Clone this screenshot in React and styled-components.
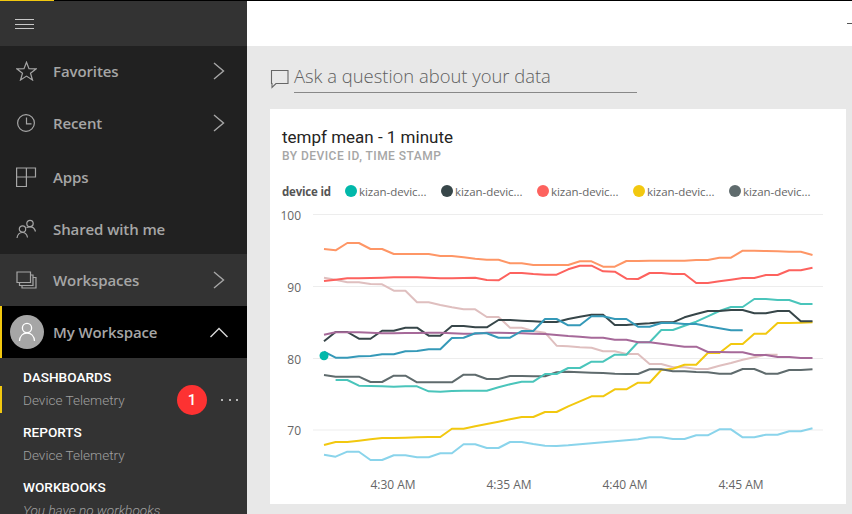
import React from "react";
import styled, { createGlobalStyle } from "styled-components";

const Global = createGlobalStyle`
  html, body { margin: 0; padding: 0; background: #fff; overflow: hidden; }
`;

const Page = styled.div`
  width: 852px;
  height: 514px;
  overflow: hidden;
  display: flex;
  flex-direction: column;
  font-family: "Open Sans", "Liberation Sans", sans-serif;
`;

const TopStrip = styled.div`
  flex: none;
  height: 1px;
  background: #000;
`;

const TopAccent = styled.div`
  width: 54px;
  height: 1px;
  background: #f2c80f;
`;

const Shell = styled.div`
  flex: 1;
  min-height: 0;
  display: flex;
`;

const Sidebar = styled.nav`
  flex: none;
  width: 247px;
  background: #333;
  display: flex;
  flex-direction: column;
  overflow: hidden;
`;

const Burger = styled.div`
  flex: none;
  height: 45px;
  display: flex;
  align-items: center;
  padding-left: 15px;
  color: #c8c8c8;
`;

const MenuGroup = styled.div`
  flex: none;
  background: #212121;
`;

const Row = styled.div`
  flex: none;
  height: 52px;
  display: flex;
  align-items: center;
  box-sizing: border-box;
  padding: ${(p) => Math.max(p.$nudge || 0, 0)}px ${(p) => (p.$active ? 19 : 22)}px ${(p) => Math.max(-(p.$nudge || 0), 0)}px ${(p) => (p.$active ? 8 : 16)}px;
  color: #a6a6a6;
  background: ${(p) => (p.$active ? "#000" : "transparent")};
  border-left: ${(p) => (p.$active ? "2px solid #f2c80f" : "none")};
`;

const RowIcon = styled.span`
  flex: none;
  width: 37px;
  height: 24px;
  display: flex;
  align-items: center;
`;

const Avatar = styled.span`
  flex: none;
  width: 34px;
  height: 34px;
  margin-right: 9px;
  border-radius: 50%;
  background: #a6a6a6;
  display: flex;
  align-items: center;
  justify-content: center;
`;

const RowLabel = styled.span`
  flex: 1;
  font-size: 15px;
  font-weight: 600;
  letter-spacing: -0.1px;
  white-space: nowrap;
`;

const Section = styled.div`
  flex: none;
  padding-top: ${(p) => p.$gap}px;
`;

const SectionHead = styled.div`
  height: 18px;
  line-height: 18px;
  padding-left: 23px;
  color: #fff;
  font-family: "Roboto", "Liberation Sans", sans-serif;
  font-size: 13.6px;
  font-weight: 500;
`;

const SectionItem = styled.div`
  height: 27px;
  display: flex;
  align-items: center;
  box-sizing: border-box;
  padding-left: ${(p) => (p.$current ? 21 : 23)}px;
  border-left: ${(p) => (p.$current ? "2px solid #f2c80f" : "none")};
  color: #a0a0a0;
  font-family: "Roboto", "Liberation Sans", sans-serif;
  font-size: 13.6px;
  font-weight: 300;
  font-style: ${(p) => (p.$empty ? "italic" : "normal")};
  white-space: nowrap;
`;

const Badge = styled.span`
  width: 30px;
  height: 30px;
  margin-left: auto;
  border-radius: 50%;
  background: #fd3232;
  color: #fff;
  font-size: 15px;
  font-weight: 500;
  display: flex;
  align-items: center;
  justify-content: center;
`;

const More = styled.span`
  width: 17px;
  margin: 0 9px 0 14px;
  display: flex;
  justify-content: space-between;
`;

const MoreDot = styled.i`
  width: 2px;
  height: 2px;
  background: #b5b5b5;
`;

const Main = styled.main`
  flex: 1;
  min-width: 0;
  display: flex;
  flex-direction: column;
`;

const Header = styled.header`
  flex: none;
  height: 45px;
  background: #fff;
  display: flex;
  justify-content: flex-end;
  align-items: center;
`;

const HeaderDash = styled.i`
  width: 5px;
  height: 1px;
  margin-bottom: 1px;
  background: #555;
`;

const Content = styled.div`
  flex: 1;
  min-height: 0;
  background: #e8e8e8;
  padding: 0 6px 0 23px;
  display: flex;
  flex-direction: column;
`;

const Ask = styled.div`
  flex: none;
  height: 63px;
  display: flex;
  align-items: flex-start;
  padding-top: 18px;
  box-sizing: border-box;
`;

const AskIcon = styled.svg`
  flex: none;
  margin-top: 5px;
`;

const AskField = styled.div`
  width: 343px;
  height: 29px;
  margin-left: 5px;
  box-sizing: border-box;
  border-bottom: 1px solid #888;
  color: #5f5f5f;
  font-size: 18.4px;
  font-weight: 300;
  line-height: 23px;
  white-space: nowrap;
`;

const Card = styled.section`
  flex: none;
  height: 395px;
  background: #fff;
  display: flex;
  flex-direction: column;
`;

const CardTitle = styled.h2`
  margin: 18px 0 0 12px;
  color: #252423;
  font-family: "Roboto", "Liberation Sans", sans-serif;
  font-size: 17px;
  font-weight: 400;
  line-height: 20px;
`;

const CardSub = styled.div`
  margin: 1px 0 0 12px;
  color: #a6a6a6;
  font-family: "Roboto", "Liberation Sans", sans-serif;
  font-size: 12px;
  font-weight: 500;
  line-height: 16px;
  letter-spacing: 0.47px;
`;

const Legend = styled.div`
  margin: 17px 0 0 12px;
  height: 20px;
  display: flex;
  align-items: center;
`;

const LegendTitle = styled.span`
  width: 63px;
  flex: none;
  color: #555;
  font-size: 11.5px;
  font-weight: 700;
  letter-spacing: -0.2px;
`;

const LegendItem = styled.span`
  flex: none;
  width: 96px;
  display: flex;
  align-items: center;
  color: #666;
  font-size: 11.5px;
  letter-spacing: -0.05px;
  white-space: nowrap;
`;

const LegendDot = styled.i`
  flex: none;
  width: 12px;
  height: 12px;
  margin-right: 2px;
  border-radius: 50%;
  background: ${(p) => p.$color};
`;

const ChartSvg = styled.svg`
  display: block;
  width: 576px;
  height: 299px;
  margin-top: 3px;
`;

const AxisText = styled.text`
  fill: #666;
  font-family: "Open Sans", "Liberation Sans", sans-serif;
  font-size: 12px;
`;

const Line = styled.polyline`
  fill: none;
  stroke: ${(p) => p.$color};
  stroke-width: 2;
  stroke-linejoin: round;
`;

// y values read off the screenshot, in 1/3 px above a base line
const trace = (base, zs) => zs.map((z) => base + z / 3);
const xAt = (i) => 324 + i * 11.63;

const series = [
  { color: "#8AD4EB", ys: trace(370, [257, 263, 248, 248, 273, 273, 259, 259, 265, 265, 253, 253, 226, 226, 237, 237, 219, 219, 225, 230, 231, 229, 226, 223, 220, 217, 214, 211, 205, 205, 210, 210, 199, 199, 181, 181, 205, 205, 197, 197, 187, 187, 178]) },
  { color: "#DFBFBF", ys: trace(210, [206, 212, 220, 220, 225, 226, 245, 245, 280, 280, 288, 295, 301, 301, 324, 324, 356, 356, 366, 371, 410, 412, 415, 416, 427, 427, 435, 435, 465, 465, 475, 475, 480, 480, 470, 462, 452, 445, 437, 437]) },
  { color: "#FE9666", ys: trace(210, [120, 124, 102, 102, 120, 120, 135, 135, 135, 135, 141, 141, 145, 149, 152, 152, 163, 163, 168, 168, 168, 168, 157, 157, 173, 173, 156, 156, 155, 155, 155, 155, 153, 153, 146, 146, 125, 125, 126, 127, 128, 128, 138]) },
  { color: "#FD625E", ys: trace(210, [216, 212, 208, 208, 207, 206, 205, 205, 205, 206, 208, 208, 207, 206, 213, 214, 192, 192, 195, 197, 197, 181, 170, 170, 187, 188, 209, 210, 192, 192, 195, 195, 222, 222, 217, 212, 207, 207, 198, 198, 184, 184, 176]) },
  { color: "#F2C80F", ys: trace(370, [228, 219, 219, 215, 211, 207, 207, 206, 205, 204, 204, 179, 179, 172, 165, 158, 151, 144, 144, 129, 129, 112, 97, 82, 82, 61, 61, 41, 41, 3, -1, -13, -13, -48, -48, -75, -75, -106, -106, -138, -138, -139, -140]) },
  { color: "#5F6B6D", ys: trace(370, [18, 23, 23, 23, 39, 39, 20, 20, 40, 40, 40, 40, 17, 17, 30, 30, 21, 21, 22, 22, 10, 8, 10, 11, 12, 14, 15, 15, 1, 1, 7, 7, 9, 10, 14, 14, 0, 0, 14, 14, 3, 3, 1]) },
  { color: "#4AC5BB", start: 1, ys: trace(370, [33, 33, 50, 51, 52, 53, 52, 52, 67, 68, 66, 65, 65, 65, 55, 46, 38, 38, 15, 15, -3, -3, -22, -22, -43, -43, -80, -80, -117, -117, -130, -142, -158, -174, -186, -186, -210, -210, -207, -207, -195, -195]) },
  { color: "#374649", ys: trace(210, [397, 369, 369, 389, 389, 365, 365, 356, 356, 380, 380, 351, 351, 355, 355, 333, 333, 335, 337, 339, 339, 330, 323, 317, 317, 348, 348, 345, 343, 340, 340, 325, 315, 306, 306, 303, 303, 313, 313, 306, 306, 337, 337]) },
  { color: "#A66999", ys: trace(210, [377, 370, 370, 370, 371, 373, 373, 372, 372, 371, 371, 373, 374, 374, 371, 371, 372, 373, 374, 375, 378, 381, 383, 386, 386, 392, 392, 400, 400, 404, 409, 413, 413, 429, 429, 430, 430, 438, 438, 444, 444, 447, 447]) },
  { color: "#3599B8", ys: trace(210, [428, 446, 446, 442, 441, 436, 436, 427, 426, 421, 421, 387, 386, 373, 373, 386, 386, 366, 366, 330, 330, 349, 349, 322, 322, 330, 330, 353, 353, 342, 342, 345, 345, 352, 358, 364, 364]) },
];

const legendColors = ["#01B8AA", "#374649", "#FD625E", "#F2C80F", "#5F6B6D"];
const gridLines = [
  { y: 215.5, label: "100" },
  { y: 287.5, label: "90" },
  { y: 359.5, label: "80" },
  { y: 431, label: "70" },
];
const timeTicks = [
  { x: 393, label: "4:30 AM" },
  { x: 509, label: "4:35 AM" },
  { x: 625, label: "4:40 AM" },
  { x: 741, label: "4:45 AM" },
];

function Glyph({ w = 22, h = 22, children, sw = 1.2, view }) {
  return (
    <svg width={w} height={h} viewBox={view || `0 0 ${w} ${h}`} fill="none" stroke="currentColor" strokeWidth={sw}>
      {children}
    </svg>
  );
}

const Chevron = ({ up }) =>
  up ? (
    <Glyph w={18} h={11} sw={1.4}><path d="M0.5 10 L9 1.5 L17.5 10" stroke="#d8d8d8" /></Glyph>
  ) : (
    <Glyph w={12} h={18} sw={1.4}><path d="M1 1 L10.5 9 L1 17" /></Glyph>
  );

const menu = [
  {
    label: "Favorites",
    chevron: true,
    nudge: -2,
    icon: (
      <Glyph w={21} h={20}><path d="M10.5 1.2 L13 7.7 L20 7.9 L14.5 12.2 L16.5 19 L10.5 15.1 L4.5 19 L6.5 12.2 L1 7.9 L8 7.7 Z" /></Glyph>
    ),
  },
  {
    label: "Recent",
    chevron: true,
    nudge: -2,
    icon: (
      <Glyph w={21} h={20}>
        <circle cx="10" cy="10" r="8.4" />
        <path d="M10.5 4.5 V10.8 H15.5" />
      </Glyph>
    ),
  },
  {
    label: "Apps",
    nudge: 2,
    icon: (
      <Glyph w={21} h={21} view="0 0 21 21"><path d="M0.6 1 H19.5 V10 H10.4 V19.5 H0.6 Z M10.4 1 V10 M0.6 10 H10.4" /></Glyph>
    ),
  },
  {
    label: "Shared with me",
    nudge: 2,
    icon: (
      <Glyph w={21} h={20}>
        <circle cx="14" cy="4.5" r="3.2" />
        <circle cx="6.5" cy="10" r="3.2" />
        <path d="M1 19 C1.5 15.5 3.5 13.5 6.5 13.5 C9.5 13.5 11 15.5 11.5 18.5 M10.5 8.5 C11.5 8 12.5 7.8 14 7.8 C16.8 7.8 18.8 9.5 19.5 12.5" />
      </Glyph>
    ),
  },
];

export default function App() {
  return (
    <Page>
      <Global />
      <TopStrip><TopAccent /></TopStrip>
      <Shell>
        <Sidebar>
          <Burger>
            <Glyph w={20} h={12} sw={1}><path d="M0 1.5 H19 M0 6.5 H19 M0 10.5 H19" /></Glyph>
          </Burger>
          <MenuGroup>
            {menu.map((m) => (
              <Row key={m.label} $nudge={m.nudge}>
                <RowIcon>{m.icon}</RowIcon>
                <RowLabel>{m.label}</RowLabel>
                {m.chevron && <Chevron />}
              </Row>
            ))}
          </MenuGroup>
          <Row>
            <RowIcon>
              <Glyph w={21} h={18}>
                <path d="M1 1 H14.5 V11.5 H1 Z M3.5 11.5 V14.5 H17 V4 H14.5 M6 14.5 V17 H20 V6.5 H17" />
              </Glyph>
            </RowIcon>
            <RowLabel>Workspaces</RowLabel>
            <Chevron />
          </Row>
          <Row $active>
            <Avatar>
              <svg width="18" height="20" viewBox="0 0 18 20" fill="none" stroke="#fff" strokeWidth="1.3">
                <circle cx="9" cy="6" r="4.6" />
                <path d="M1.5 19 C1.8 14 5 11 9 11 C13 11 16.2 14 16.5 19" />
              </svg>
            </Avatar>
            <RowLabel>My Workspace</RowLabel>
            <Chevron up />
          </Row>
          <Section $gap={10}>
            <SectionHead>DASHBOARDS</SectionHead>
            <SectionItem $current>
              Device Telemetry
              <Badge>1</Badge>
              <More><MoreDot /><MoreDot /><MoreDot /></More>
            </SectionItem>
          </Section>
          <Section $gap={10}>
            <SectionHead>REPORTS</SectionHead>
            <SectionItem>Device Telemetry</SectionItem>
          </Section>
          <Section $gap={10}>
            <SectionHead>WORKBOOKS</SectionHead>
            <SectionItem $empty>You have no workbooks</SectionItem>
          </Section>
        </Sidebar>
        <Main>
          <Header><HeaderDash /></Header>
          <Content>
            <Ask>
              <AskIcon width="19" height="20" viewBox="0 0 19 20" fill="none" stroke="#666" strokeWidth="1.1">
                <path d="M1.5 1.5 H18 V14.5 H6 L2 18.5 V14.5 H1.5 Z" />
              </AskIcon>
              <AskField>Ask a question about your data</AskField>
            </Ask>
            <Card>
              <CardTitle>tempf mean - 1 minute</CardTitle>
              <CardSub>BY DEVICE ID, TIME STAMP</CardSub>
              <Legend>
                <LegendTitle>device id</LegendTitle>
                {legendColors.map((c) => (
                  <LegendItem key={c}>
                    <LegendDot $color={c} />
                    kizan-devic...
                  </LegendItem>
                ))}
              </Legend>
              <ChartSvg viewBox="270 205 576 299">
                {gridLines.map((g) => (
                  <g key={g.label}>
                    <line x1="313" x2="823" y1={g.y} y2={g.y} stroke="#ededed" strokeWidth="1" />
                    <AxisText x="301" y={g.y + 5} textAnchor="end">{g.label}</AxisText>
                  </g>
                ))}
                {timeTicks.map((t) => (
                  <AxisText key={t.label} x={t.x} y="490" textAnchor="middle">{t.label}</AxisText>
                ))}
                {series.map((s) => (
                  <Line
                    key={s.color}
                    $color={s.color}
                    points={s.ys.map((y, i) => `${xAt(i + (s.start || 0)).toFixed(1)},${y.toFixed(1)}`).join(" ")}
                  />
                ))}
                <circle cx="324" cy="356.7" r="4.5" fill="#01B8AA" />
              </ChartSvg>
            </Card>
          </Content>
        </Main>
      </Shell>
    </Page>
  );
}
